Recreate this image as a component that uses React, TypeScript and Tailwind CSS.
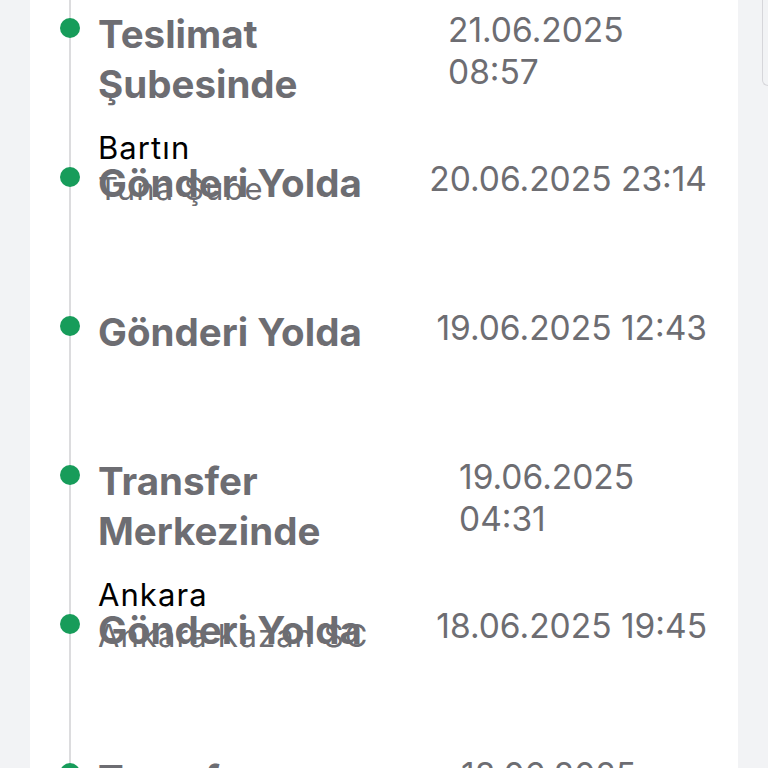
import React from "react";

interface Step {
  title: string;
  date: string;
  dateClass: string;
  city?: string;
  branch?: string;
}

const steps: Step[] = [
  {
    title: "Teslimat Şubesinde",
    date: "21.06.2025 08:57",
    dateClass: "w-[259px]",
    city: "Bartın",
    branch: "Tuna Şube",
  },
  { title: "Gönderi Yolda", date: "20.06.2025 23:14", dateClass: "shrink-0 whitespace-nowrap" },
  { title: "Gönderi Yolda", date: "19.06.2025 12:43", dateClass: "shrink-0 whitespace-nowrap" },
  {
    title: "Transfer Merkezinde",
    date: "19.06.2025 04:31",
    dateClass: "w-[248px]",
    city: "Ankara",
    branch: "Ankara Kazan SC",
  },
  { title: "Gönderi Yolda", date: "18.06.2025 19:45", dateClass: "shrink-0 whitespace-nowrap" },
  {
    title: "Transfer Merkezinde",
    date: "18.06.2025 14:12",
    dateClass: "w-[246px]",
    city: "Ankara",
    branch: "Ankara Transfer",
  },
];

const App = () => {
  return (
    <div className="flex h-screen overflow-hidden bg-[#f2f3f5] font-['Inter','Roboto',sans-serif]">
      <div className="w-[30px] shrink-0" />
      <div className="w-[708px] shrink-0 bg-white">
        <div className="ml-[39px] border-l-2 border-[#dcdcde] pt-[9px] pr-[31px]">
          {steps.map((step: Step, index: number) => (
            <div key={index} className="relative h-[149px] pl-[27px]">
              <div className="absolute -left-[11px] top-[9px] h-5 w-5 rounded-full bg-[#179c5a]" />
              <div className="flex items-start justify-between gap-3">
                <div className="min-w-0 flex-1 text-[38.5px] font-bold leading-[50px] text-[#6d6d72]">
                  {step.title}
                </div>
                <div className={`${step.dateClass} text-[33.5px] leading-[42px] text-[#6d6d72]`}>
                  {step.date}
                </div>
              </div>
              {step.city && (
                <div className="mt-[18px] text-[31px] leading-[41px] tracking-[0.035em]">
                  <div className="text-black">{step.city}</div>
                  <div className="text-[#6d6d72]">{step.branch}</div>
                </div>
              )}
            </div>
          ))}
        </div>
      </div>
      <div className="flex flex-1 justify-end">
        <div className="h-[86px] w-[6px] rounded-bl-lg border-b border-l border-[#d6d6da]" />
      </div>
    </div>
  );
};

export default App;
